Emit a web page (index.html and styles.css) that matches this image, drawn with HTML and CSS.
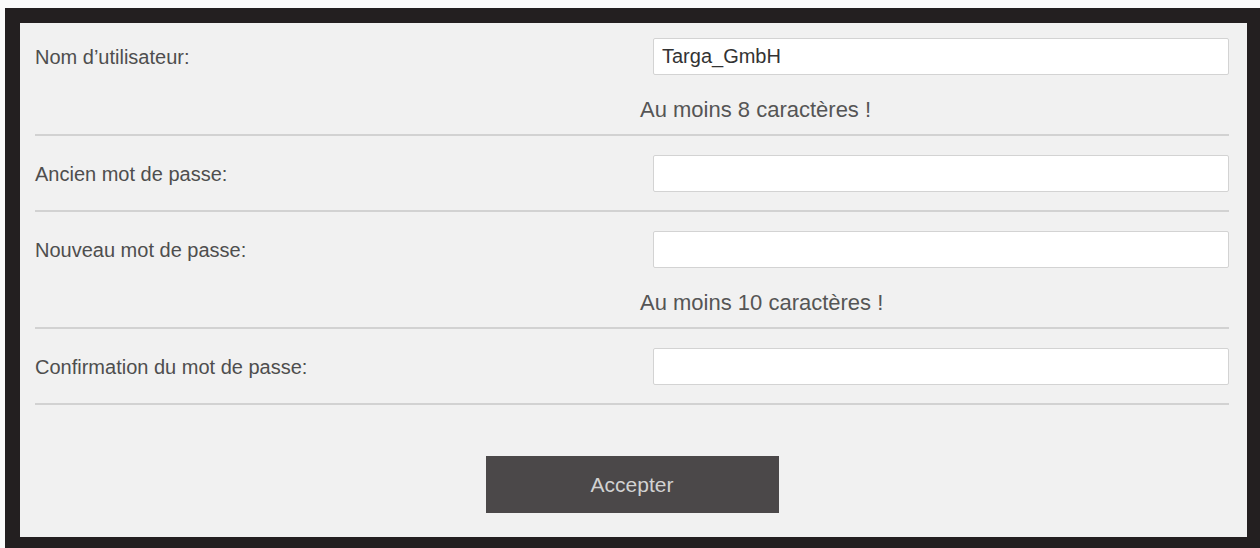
FILE: index.html
```html
<!DOCTYPE html>
<html lang="fr">
<head>
    <meta charset="UTF-8">
    <meta name="viewport" content="width=device-width, initial-scale=1.0">
    <title>Changer le mot de passe</title>
    <link rel="stylesheet" href="styles.css">
</head>
<body>
    <div class="frame">
        <form class="panel" id="passwordForm">
            <div class="row first hinted">
                <label for="username">Nom d’utilisateur:</label>
                <input type="text" id="username" name="username" value="Targa_GmbH">
                <p class="hint">Au moins 8 caractères !</p>
            </div>
            <div class="row">
                <label for="oldPassword">Ancien mot de passe:</label>
                <input type="password" id="oldPassword" name="oldPassword">
            </div>
            <div class="row hinted">
                <label for="newPassword">Nouveau mot de passe:</label>
                <input type="password" id="newPassword" name="newPassword">
                <p class="hint">Au moins 10 caractères !</p>
            </div>
            <div class="row">
                <label for="confirmPassword">Confirmation du mot de passe:</label>
                <input type="password" id="confirmPassword" name="confirmPassword">
            </div>
            <button type="submit" class="accept-button">Accepter</button>
        </form>
    </div>
</body>
</html>
```

FILE: styles.css
```css
body {
    margin: 0;
    padding: 0;
    background-color: #fafafa;
    font-family: "Liberation Sans", Arial, sans-serif;
}

.frame {
    margin: 8px 0 0 5px;
    width: 1227px;
    border: 15px solid #231f20;
    border-right-width: 13px;
    border-bottom-width: 11px;
    background-color: #f1f1f1;
}

.panel {
    height: 514px;
    box-sizing: border-box;
    padding: 0 18px 25px 15px;
    margin: 0;
}

.row {
    display: grid;
    grid-template-columns: 618px 1fr;
    align-items: center;
    padding: 19px 0 18px 0;
    border-bottom: 2px solid #d2d2d2; /* linia oddzielająca */
}

.row.first {
    padding-top: 15px;
}

.row.hinted {
    padding-bottom: 12px;
}

.row label {
    font-size: 20px;
    line-height: 24px;
    color: #4e4e4e;
}

.row input {
    height: 37px;
    box-sizing: border-box;
    padding: 0 8px;
    border: 1px solid #d3d3d3;
    border-radius: 2px;
    background-color: #fff;
    font-family: inherit;
    font-size: 20px;
    color: #333;
    outline: none;
}

.hint {
    grid-column: 2;
    margin: 23px 0 0 -13px;
    font-size: 22px;
    line-height: 24px;
    color: #555;
}

.accept-button {
    display: block;
    width: 293px;
    height: 57px;
    margin: 51px auto 0 auto;
    border: none;
    background-color: #4b4849;
    color: #d2d2d2;
    font-family: inherit;
    font-size: 21px;
    cursor: pointer;
}

.accept-button:hover {
    background-color: #5a5758;
}
```
